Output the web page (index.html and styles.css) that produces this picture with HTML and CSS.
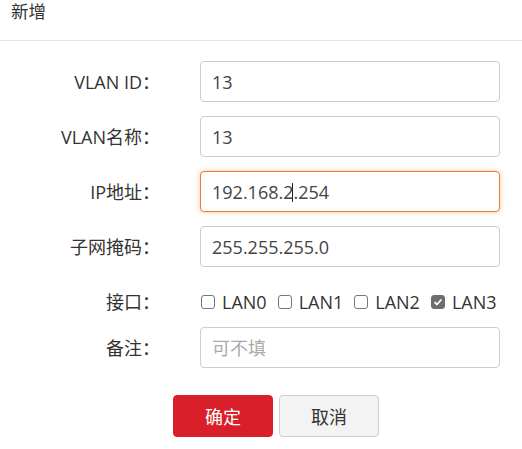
FILE: index.html
```html
<!DOCTYPE html>
<html lang="zh-CN">
<head>
    <meta charset="UTF-8">
    <meta name="viewport" content="width=device-width, initial-scale=1.0">
    <title>新增</title>
    <link rel="stylesheet" href="styles.css">
</head>
<body>

    <!-- Dialog header -->
    <div class="dialog-title">新增</div>

    <!-- VLAN form -->
    <form class="vlan-form" id="vlan-form">
        <div class="form-row">
            <label class="form-label" for="vlanId">VLAN ID：</label>
            <input class="form-input" type="text" id="vlanId" value="13">
        </div>
        <div class="form-row">
            <label class="form-label" for="vlanName">VLAN名称：</label>
            <input class="form-input" type="text" id="vlanName" value="13">
        </div>
        <div class="form-row">
            <label class="form-label" for="ipAddr">IP地址：</label>
            <div class="input-wrap">
                <input class="form-input focused" type="text" id="ipAddr" value="192.168.2.254">
                <span class="caret"></span>
            </div>
        </div>
        <div class="form-row">
            <label class="form-label" for="netmask">子网掩码：</label>
            <input class="form-input" type="text" id="netmask" value="255.255.255.0">
        </div>
        <div class="form-row check-row">
            <span class="form-label">接口：</span>
            <div class="check-group">
                <label class="check-item"><input type="checkbox" name="port" value="LAN0">LAN0</label>
                <label class="check-item"><input type="checkbox" name="port" value="LAN1">LAN1</label>
                <label class="check-item"><input type="checkbox" name="port" value="LAN2">LAN2</label>
                <label class="check-item"><input type="checkbox" name="port" value="LAN3" checked>LAN3</label>
            </div>
        </div>
        <div class="form-row">
            <label class="form-label" for="remark">备注：</label>
            <input class="form-input" type="text" id="remark" placeholder="可不填">
        </div>
        <div class="form-actions">
            <button type="submit" class="btn btn-primary">确定</button>
            <button type="button" class="btn btn-default">取消</button>
        </div>
    </form>

</body>
</html>
```

FILE: styles.css
```css
body {
    margin: 0;
    font-family: "Open Sans", "Noto Sans CJK SC", sans-serif;
    font-size: 18px;
    color: #333;
    background: #fff;
}
.dialog-title {
    height: 41px;
    padding-left: 11px;
    line-height: 22px;
    font-size: 17.5px;
    border-bottom: 1px solid #e5e5e5;
    box-sizing: border-box;
}
.vlan-form {
    padding-top: 20px;
}
.form-row {
    display: flex;
    align-items: center;
    margin-bottom: 14px;
}
.form-label {
    width: 160px;
    margin-right: 40px;
    text-align: right;
    line-height: 22px;
    color: #333;
}
.input-wrap {
    position: relative;
}
.form-input {
    width: 300px;
    height: 41px;
    box-sizing: border-box;
    padding: 0 11px;
    border: 1px solid #ccc;
    border-radius: 4px;
    font-family: inherit;
    font-size: 18px;
    color: #444;
    outline: none;
}
.form-input::placeholder {
    color: #aaa;
}
.form-input.focused {
    border-color: #f07a2e;
    box-shadow: 0 0 5px rgba(240, 122, 46, 0.45);
}
.caret {
    position: absolute;
    left: 92px;
    top: 12px;
    width: 1px;
    height: 19px;
    background: #222;
}
.check-row {
    height: 22px;
    padding-top: 10px;
}
.check-group {
    display: flex;
    align-items: center;
}
.check-item {
    display: flex;
    align-items: center;
    margin-right: 10px;
    line-height: 22px;
    color: #333;
}
.check-item input {
    appearance: none;
    width: 14px;
    height: 14px;
    margin: 0 7px 0 1px;
    border: 1px solid #777;
    border-radius: 3px;
    box-sizing: border-box;
    background: #fff;
}
.check-item input:checked {
    background: #6e6e6e center / 10px 10px no-repeat url("data:image/svg+xml,%3Csvg xmlns='http://www.w3.org/2000/svg' viewBox='0 0 10 10'%3E%3Cpath d='M1.5 5.2l2.3 2.3 4.7-5' fill='none' stroke='%23fff' stroke-width='1.8'/%3E%3C/svg%3E");
    border-color: #6e6e6e;
}
.form-actions {
    display: flex;
    gap: 6px;
    padding-left: 173px;
    margin-top: 27px;
}
.btn {
    width: 100px;
    height: 42px;
    border-radius: 4px;
    font-family: inherit;
    font-size: 18px;
    cursor: pointer;
}
.btn-primary {
    background-color: #d9202a;
    border: 1px solid #d9202a;
    color: #fff;
}
.btn-default {
    background-color: #f3f3f3;
    border: 1px solid #ccc;
    color: #333;
}
```
